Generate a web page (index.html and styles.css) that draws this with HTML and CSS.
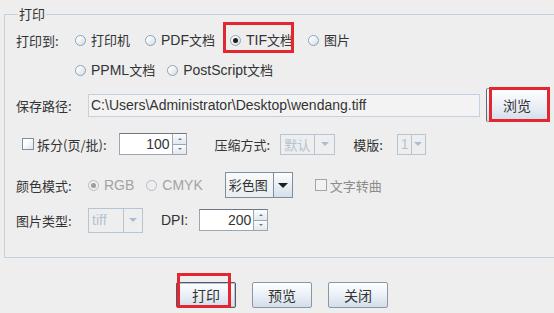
FILE: index.html
```html
<!DOCTYPE html>
<html lang="zh">
<head>
    <meta charset="UTF-8">
    <title>打印</title>
    <link rel="stylesheet" href="styles.css">
</head>
<body>
    <fieldset class="group">
        <legend>打印</legend>

        <div class="row r1">
            <span class="lbl lbl-to">打印到:</span>
            <label class="radio"><i class="dot"></i>打印机</label>
            <label class="radio"><i class="dot"></i><span class="en">PDF</span>文档</label>
            <label class="radio marked-tif"><i class="dot on"></i><span class="en">TIF</span>文档</label>
            <label class="radio"><i class="dot"></i>图片</label>
        </div>

        <div class="row r2">
            <label class="radio"><i class="dot"></i><span class="en">PPML</span>文档</label>
            <label class="radio"><i class="dot"></i><span class="en">PostScript</span>文档</label>
        </div>

        <div class="row r3">
            <span class="lbl lbl-wide">保存路径:</span>
            <input class="path" type="text" value="C:\Users\Administrator\Desktop\wendang.tiff">
            <button class="btn btn-browse">浏览</button>
        </div>

        <div class="row r4">
            <label class="check"><i class="box"></i>拆分(页/批):</label>
            <div class="spin spin-split">
                <span class="spin-val">100</span>
                <span class="spin-btns"><i class="up"></i><i class="down"></i></span>
            </div>
            <span class="lbl lbl-zip">压缩方式:</span>
            <div class="combo off combo-zip"><span class="combo-val">默认</span><span class="combo-arrow"></span></div>
            <span class="lbl lbl-tpl">模版:</span>
            <div class="combo off combo-tpl"><span class="combo-val en">1</span><span class="combo-arrow"></span></div>
        </div>

        <div class="row r5">
            <span class="lbl lbl-wide">颜色模式:</span>
            <label class="radio off"><i class="dot on"></i><span class="en">RGB</span></label>
            <label class="radio off"><i class="dot"></i><span class="en">CMYK</span></label>
            <div class="combo combo-color"><span class="combo-val">彩色图</span><span class="combo-arrow"></span></div>
            <label class="check off"><i class="box"></i>文字转曲</label>
        </div>

        <div class="row r6">
            <span class="lbl lbl-wide">图片类型:</span>
            <div class="combo off combo-type"><span class="combo-val en">tiff</span><span class="combo-arrow"></span></div>
            <span class="lbl lbl-dpi en">DPI:</span>
            <div class="spin spin-dpi">
                <span class="spin-val">200</span>
                <span class="spin-btns"><i class="up"></i><i class="down"></i></span>
            </div>
        </div>
    </fieldset>

    <div class="actions">
        <button class="btn btn-main focused">打印</button>
        <button class="btn btn-main">预览</button>
        <button class="btn btn-main">关闭</button>
    </div>
</body>
</html>
```

FILE: styles.css
```css
* {
    box-sizing: border-box;
}

body {
    margin: 0;
    background-color: #eeeeee;
    color: #333333;
    font-family: "Noto Sans CJK SC", "Liberation Sans", sans-serif;
    font-size: 13px;
    overflow: hidden;
}

.en {
    font-family: "Liberation Sans", "Noto Sans CJK SC", sans-serif;
    font-size: 14px;
}

/* group box */
.group {
    margin: 4px -10px 0 4px;
    padding: 0 0 23px 11px;
    border: 1px solid #c3d1df;
    min-width: 0;
}

.group legend {
    margin-left: 2px;
    padding: 0 1px;
    line-height: 20px;
    font-size: 13px;
}

.row {
    display: flex;
    align-items: center;
}

.r1 { margin-top: 2px; height: 28px; gap: 15px; }
.r2 { margin-top: 2px; height: 28px; gap: 12px; padding-left: 59px; }
.r3 { margin-top: 4px; height: 34px; }
.r4 { margin-top: 10px; height: 24px; }
.r5 { margin-top: 15px; height: 28px; }
.r6 { margin-top: 7px; height: 28px; }

.lbl {
    white-space: nowrap;
}

.lbl-to { width: 44px; }
.lbl-wide { width: 72px; }
.lbl-zip { margin-left: 28px; }
.lbl-tpl { margin-left: 18px; }
.lbl-dpi { margin-left: 18px; }

/* radios */
.radio {
    position: relative;
    display: inline-flex;
    align-items: center;
    line-height: 18px;
    white-space: nowrap;
}

.dot {
    position: relative;
    width: 11px;
    height: 11px;
    margin-right: 5px;
    border-radius: 50%;
    border: 1px solid #8ea3b7;
    background: linear-gradient(135deg, #ffffff 20%, #d5dfe9 90%);
}

.dot.on::after {
    content: "";
    position: absolute;
    left: 2px;
    top: 2px;
    width: 5px;
    height: 5px;
    border-radius: 50%;
    background: #1f1f1f;
}

.radio.off {
    color: #a3a3a3;
}

.radio.off .dot {
    border-color: #b3bcc6;
    background: #eeeeee;
}

.radio.off .dot.on::after {
    background: #9d9d9d;
}

.r5 .radio + .radio { margin-left: 12px; }

/* annotation boxes */
.marked-tif::after,
.btn-browse::after,
.focused::after {
    content: "";
    position: absolute;
    border: 3px solid #e3262f;
    pointer-events: none;
}

.marked-tif::after {
    left: -7px;
    right: -1px;
    top: -9px;
    bottom: -4px;
}

/* text field */
.path {
    width: 392px;
    height: 23px;
    margin: 0;
    padding: 0 2px;
    border: 1px solid #c4d1de;
    background: #f3f3f3;
    color: #333333;
    font-family: "Liberation Sans", sans-serif;
    font-size: 14px;
}

/* buttons */
.btn {
    position: relative;
    margin: 0;
    padding: 0;
    border: 1px solid #8a98a6;
    border-radius: 2px;
    background: linear-gradient(#fdfeff, #edf2f7 45%, #d3deea);
    color: #333333;
    font-family: "Noto Sans CJK SC", sans-serif;
    font-size: 14px;
}

.btn-browse {
    width: 62px;
    height: 34px;
    margin-left: 6px;
    border-left-color: #5d6872;
}

.btn-browse::after {
    left: 2px;
    right: -3px;
    top: -2px;
    bottom: -1px;
}

/* checkbox */
.check {
    display: inline-flex;
    align-items: center;
    white-space: nowrap;
}

.box {
    width: 12px;
    height: 12px;
    margin-right: 3px;
    border: 1px solid #7c8fa3;
    background: linear-gradient(135deg, #ffffff 30%, #dfe6ee);
}

.r4 .check { margin-left: 6px; }

.check.off {
    margin-left: 22px;
    color: #8c8c8c;
}

.check.off .box {
    border-color: #a4a4a4;
    background: #f2f2f2;
}

/* spinner */
.spin {
    display: flex;
    height: 22px;
    border: 1px solid #9aa6b2;
    border-top-color: #6f7983;
    background: #ffffff;
}

.spin-split { width: 68px; margin-left: 12px; }
.spin-dpi { width: 69px; margin-left: 11px; }

.spin-val {
    flex: 1;
    padding-right: 2px;
    text-align: right;
    font-family: "Liberation Sans", sans-serif;
    font-size: 14px;
    line-height: 20px;
}

.spin-btns {
    display: flex;
    flex-direction: column;
    width: 14px;
    border-left: 1px solid #9aa6b2;
}

.spin-btns i {
    position: relative;
    flex: 1;
    background: linear-gradient(#fbfcfd, #e2e8ee);
}

.spin-btns .up {
    border-bottom: 1px solid #9aa6b2;
}

.spin-btns i::after {
    content: "";
    position: absolute;
    left: 5px;
    top: 4px;
    border-left: 2px solid transparent;
    border-right: 2px solid transparent;
}

.spin-btns .up::after { border-bottom: 2px solid #6d7680; }
.spin-btns .down::after { border-top: 2px solid #6d7680; top: 3px; }

/* combo boxes */
.combo {
    display: flex;
    border: 1px solid #7f8e9d;
    background: linear-gradient(#fafafa, #e9edf1);
}

.combo-val {
    flex: 1;
    padding-left: 3px;
    white-space: nowrap;
    overflow: hidden;
}

.combo-arrow {
    position: relative;
    border-left: 1px solid #7f8e9d;
    background: linear-gradient(#fdfeff, #d4dfea);
}

.combo-arrow::after {
    content: "";
    position: absolute;
    left: 50%;
    top: 50%;
    margin: -2px 0 0 -5px;
    border-top: 5px solid #1c1c1c;
    border-left: 5px solid transparent;
    border-right: 5px solid transparent;
}

.combo.off {
    border-color: #b4c5d6;
    background: #eeeeee;
    color: #b4c3d2;
}

.combo.off .combo-arrow {
    border-left-color: #b4c5d6;
    background: #eeeeee;
}

.combo.off .combo-arrow::after {
    margin: -2px 0 0 -4px;
    border-top: 4px solid #a9bed2;
    border-left: 4px solid transparent;
    border-right: 4px solid transparent;
}

.combo-zip { width: 55px; height: 21px; margin-left: 10px; line-height: 19px; }
.combo-zip .combo-arrow { width: 20px; }
.combo-tpl { width: 29px; height: 21px; margin-left: 14px; line-height: 19px; }
.combo-tpl .combo-arrow { width: 14px; }
.combo-color { width: 68px; height: 26px; margin-left: 22px; line-height: 24px; }
.combo-color .combo-arrow { width: 19px; }
.combo-type { width: 55px; height: 25px; line-height: 23px; }
.combo-type .combo-arrow { width: 19px; }

/* bottom buttons */
.actions {
    display: flex;
    justify-content: center;
    gap: 16px;
    margin-top: 24px;
    padding-left: 10px;
}

.btn-main {
    width: 60px;
    height: 26px;
}

.focused {
    border-color: #4f5a64;
    box-shadow: inset 0 0 0 1px #b9c6d3;
}

.focused::after {
    left: 0;
    right: 4px;
    top: -10px;
    bottom: -1px;
}
```
